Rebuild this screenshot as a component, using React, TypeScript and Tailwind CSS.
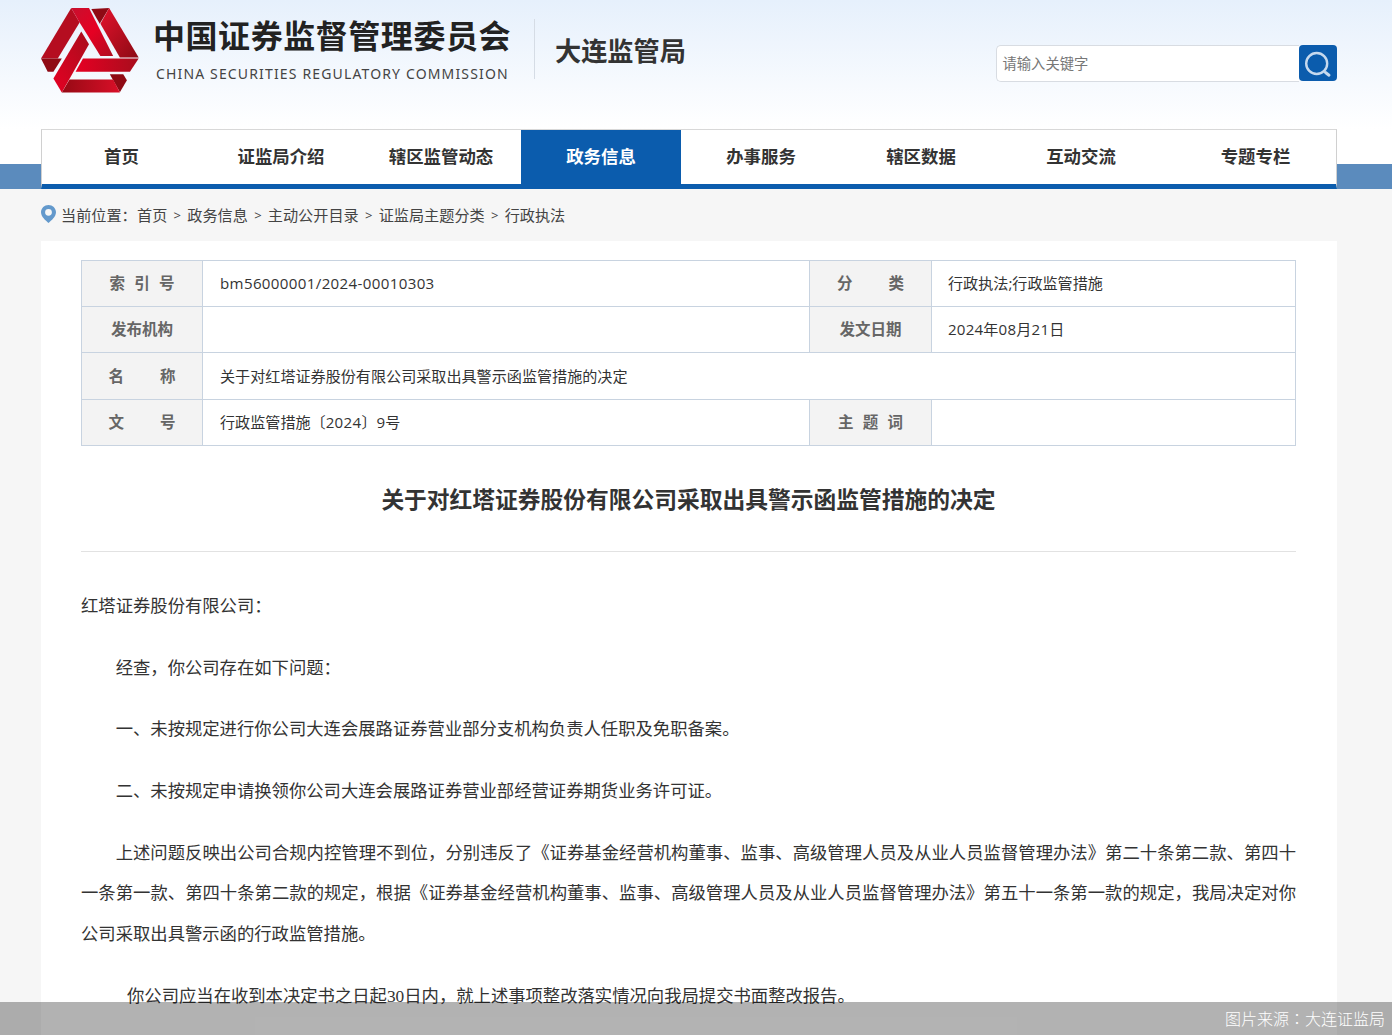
const NAV = ["首页", "证监局介绍", "辖区监管动态", "政务信息", "办事服务", "辖区数据", "互动交流"];
const CRUMBS = ["首页", "政务信息", "主动公开目录", "证监局主题分类", "行政执法"];

const cjk = "font-['Open_Sans','Noto_Sans_CJK_SC',sans-serif]";

function Logo() {
  return (
    <svg width="98" height="85" viewBox="35 25 292 253" className="shrink-0">
      <defs>
        <linearGradient id="bandA" x1="0" y1="0" x2="1" y2="1">
          <stop offset="0" stopColor="#c8102e" />
          <stop offset="0.5" stopColor="#e60023" />
          <stop offset="1" stopColor="#b00d20" />
        </linearGradient>
        <linearGradient id="bandB" x1="0" y1="0" x2="1" y2="1">
          <stop offset="0" stopColor="#e3122c" />
          <stop offset="1" stopColor="#8c0a14" />
        </linearGradient>
        <linearGradient id="bandC" x1="0" y1="0" x2="1" y2="0">
          <stop offset="0" stopColor="#e60023" />
          <stop offset="1" stopColor="#a80d1c" />
        </linearGradient>
        <linearGradient id="bandD" x1="0" y1="0" x2="1" y2="0">
          <stop offset="0" stopColor="#960a14" />
          <stop offset="1" stopColor="#d90f28" />
        </linearGradient>
        <linearGradient id="bandE" x1="0" y1="1" x2="1" y2="0">
          <stop offset="0" stopColor="#e60023" />
          <stop offset="1" stopColor="#a80d1c" />
        </linearGradient>
      </defs>
      <polygon points="35,175 125,25 150,68 85,175" fill="#b50d20" />
      <polygon points="125,25 178,25 250,168 212,168 150,68" fill="url(#bandA)" />
      <polygon points="185,28 238,25 210,72" fill="#8f0a14" />
      <polygon points="238,25 326,172 270,172 212,72" fill="url(#bandB)" />
      <polygon points="160,175 326,175 300,215 138,215" fill="url(#bandC)" />
      <polygon points="240,222 280,222 291,240 270,276" fill="#8f0a14" />
      <polygon points="120,238 250,238 270,277 97,277" fill="url(#bandD)" />
      <polygon points="155,95 178,133 97,277 72,235" fill="url(#bandE)" />
      <polygon points="35,175 97,175 72,215 55,215" fill="#8f0a14" />
    </svg>
  );
}

function SearchIcon() {
  return (
    <svg width="38" height="36" viewBox="0 0 38 36" fill="none">
      <circle cx="17.7" cy="18.5" r="10.5" stroke="#c6d9ee" strokeWidth="2.4" />
      <path d="M26.5 27.5 L30 30.2" stroke="#c6d9ee" strokeWidth="3" strokeLinecap="round" />
    </svg>
  );
}

function PinIcon() {
  return (
    <svg width="15" height="18" viewBox="0 0 15 18" className="shrink-0">
      <path
        fillRule="evenodd"
        d="M7.5 0C3.4 0 0 3.2 0 7.3 0 11.6 4.6 15.6 7.5 18 10.4 15.6 15 11.6 15 7.3 15 3.2 11.6 0 7.5 0ZM7.5 3.9a3.4 3.4 0 1 1 0 6.8 3.4 3.4 0 0 1 0-6.8Z"
        fill="#6399cc"
      />
    </svg>
  );
}

function Label({ chars, wide }: { chars: string[]; wide?: boolean }) {
  return (
    <div className={`mx-auto flex justify-between ${wide ? "w-[67px]" : "w-[65px]"}`}>
      {chars.map((c) => (
        <span key={c}>{c}</span>
      ))}
    </div>
  );
}

export default function App() {
  const th = "border border-[#c8d3e0] bg-[#f3f3f3] text-center text-[15.5px] font-bold text-[#666]";
  const td = "border border-[#c8d3e0] pl-[17px] text-[15.1px] text-[#333]";
  const tdRight = "border border-[#c8d3e0] pl-[16px] text-[15.1px] text-[#333]";
  const para = "indent-[2em]";

  return (
    <div className={`relative h-[1035px] overflow-hidden bg-[#f6f6f6] ${cjk}`} lang="zh-CN">
      {/* HEADER */}
      <div className="h-[129px] bg-gradient-to-b from-[#e6f0fc] to-white">
        <div className="flex pl-[41px] pr-[55px] pt-2">
          <Logo />
          <div className="ml-[14px] w-[357px] shrink-0">
            <div className="mt-[7px] whitespace-nowrap text-[32px] font-bold leading-[42px] tracking-[0.55px] text-[#222]">
              中国证券监督管理委员会
            </div>
            <div className="ml-[3px] mt-[8px] whitespace-nowrap font-['Noto_Sans',sans-serif] text-[14px] leading-[18px] tracking-[1.15px] text-[#444]">
              CHINA SECURITIES REGULATORY COMMISSION
            </div>
          </div>
          <div className="ml-[24px] mt-[11px] h-[60px] w-px bg-[#d5dce5]" />
          <div className="ml-[20px] mt-[24px] text-[26.2px] font-bold leading-[38px] text-[#333]">大连监管局</div>
          <div className="ml-auto mt-[37px] flex h-[37px] w-[341px]">
            <div className="flex h-[37px] flex-1 items-center rounded-l-[5px] border border-r-0 border-[#d8dce2] bg-white pl-[5.5px] pt-[1px] text-[14.3px] text-[#777]">
              请输入关键字
            </div>
            <div className="h-9 w-[38px] overflow-hidden rounded-[4px] bg-[#0b5cad]">
              <SearchIcon />
            </div>
          </div>
        </div>
      </div>

      {/* NAV */}
      <div className="flex h-[60px] bg-white">
        <div className="h-[25px] w-[41px] self-end bg-[#5b8bbd]" />
        <div className="flex w-[1296px] border-x border-t border-x-[#d0d0d0] border-t-[#d8d8d8] border-b-[5px] border-b-[#0b5cad] bg-white">
          {NAV.map((n, i) => (
            <div
              key={n}
              className={`flex items-center justify-center pb-[2px] text-[17.4px] font-bold ${i === 0 ? "w-[159px]" : "w-[160px]"} ${
                n === "政务信息" ? "bg-[#0b5cad] text-white" : "text-[#333]"
              }`}
            >
              {n}
            </div>
          ))}
          <div className="flex flex-1 items-center justify-center pb-[2px] pl-[14px] text-[17.4px] font-bold text-[#333]">
            专题专栏
          </div>
        </div>
        <div className="h-[25px] flex-1 self-end bg-[#5b8bbd]" />
      </div>

      {/* BREADCRUMB */}
      <div className="flex h-[52px] items-center pl-[41px] pt-[1px] text-[15.15px] text-[#444]">
        <div className="mb-[4px]">
          <PinIcon />
        </div>
        <span className="ml-[5px] w-[76px]">当前位置：</span>
        {CRUMBS.map((c, i) => (
          <span key={c} className="flex">
            {i > 0 && <span className="w-[20px] text-center text-[13px] leading-[22px]">&gt;</span>}
            <span>{c}</span>
          </span>
        ))}
      </div>

      {/* PANEL */}
      <div className="mx-[41px] h-[794px] w-[1296px] bg-white pl-[40px] pr-[41px] pt-[19px]">
        <table className="w-[1215px] table-fixed border-collapse">
          <colgroup>
            <col className="w-[121px]" />
            <col className="w-[607px]" />
            <col className="w-[122px]" />
            <col />
          </colgroup>
          <tbody>
            <tr className="h-[46px]">
              <th className={th}>
                <Label chars={["索", "引", "号"]} />
              </th>
              <td className={`${td} tracking-[0.35px]`}>bm56000001/2024-00010303</td>
              <th className={th}>
                <Label chars={["分", "类"]} wide />
              </th>
              <td className={tdRight}>行政执法;行政监管措施</td>
            </tr>
            <tr className="h-[46px]">
              <th className={th}>发布机构</th>
              <td className={td} />
              <th className={th}>发文日期</th>
              <td className={`${tdRight} tracking-[0.2px]`}>2024年08月21日</td>
            </tr>
            <tr className="h-[47px]">
              <th className={`${th} pt-[2px]`}>
                <Label chars={["名", "称"]} wide />
              </th>
              <td className={td} colSpan={3}>
                关于对红塔证券股份有限公司采取出具警示函监管措施的决定
              </td>
            </tr>
            <tr className="h-[46px]">
              <th className={th}>
                <Label chars={["文", "号"]} wide />
              </th>
              <td className={td}>
                行政监管措施〔<span className="tracking-[0.3px]">2024</span>〕9号
              </td>
              <th className={th}>
                <Label chars={["主", "题", "词"]} />
              </th>
              <td className={tdRight} />
            </tr>
          </tbody>
        </table>

        <h1 className="mt-[33px] border-b border-[#e2e2e2] pb-[31px] text-center text-[22.75px] font-bold leading-[41px] text-[#333]">
          关于对红塔证券股份有限公司采取出具警示函监管措施的决定
        </h1>

        <div className="mt-[33px] flex flex-col gap-[21.1px] text-justify text-[17.33px] leading-[40.6px] text-[#333]">
          <p>红塔证券股份有限公司：</p>
          <p className={para}>经查，你公司存在如下问题：</p>
          <p className={para}>一、未按规定进行你公司大连会展路证券营业部分支机构负责人任职及免职备案。</p>
          <p className={para}>二、未按规定申请换领你公司大连会展路证券营业部经营证券期货业务许可证。</p>
          <p className={para}>
            上述问题反映出公司合规内控管理不到位，分别违反了《证券基金经营机构董事、监事、高级管理人员及从业人员监督管理办法》第二十条第二款、第四十一条第一款、第四十条第二款的规定，根据《证券基金经营机构董事、监事、高级管理人员及从业人员监督管理办法》第五十一条第一款的规定，我局决定对你公司采取出具警示函的行政监管措施。
          </p>
          <p className="indent-[46px]">
            你公司应当在收到本决定书之日起<span className="font-['Liberation_Serif',serif]">30</span>日内，就上述事项整改落实情况向我局提交书面整改报告。
          </p>
        </div>
      </div>

      {/* PHOTO CREDIT */}
      <div className="absolute inset-x-0 bottom-0 h-[33px] bg-black/30 pr-[7px] text-right text-[16px] font-light leading-[33px] text-white">
        图片来源
        <span lang="zh-TW" className="font-['Noto_Sans_CJK_TC',sans-serif]">
          ：
        </span>
        大连证监局
      </div>
    </div>
  );
}
